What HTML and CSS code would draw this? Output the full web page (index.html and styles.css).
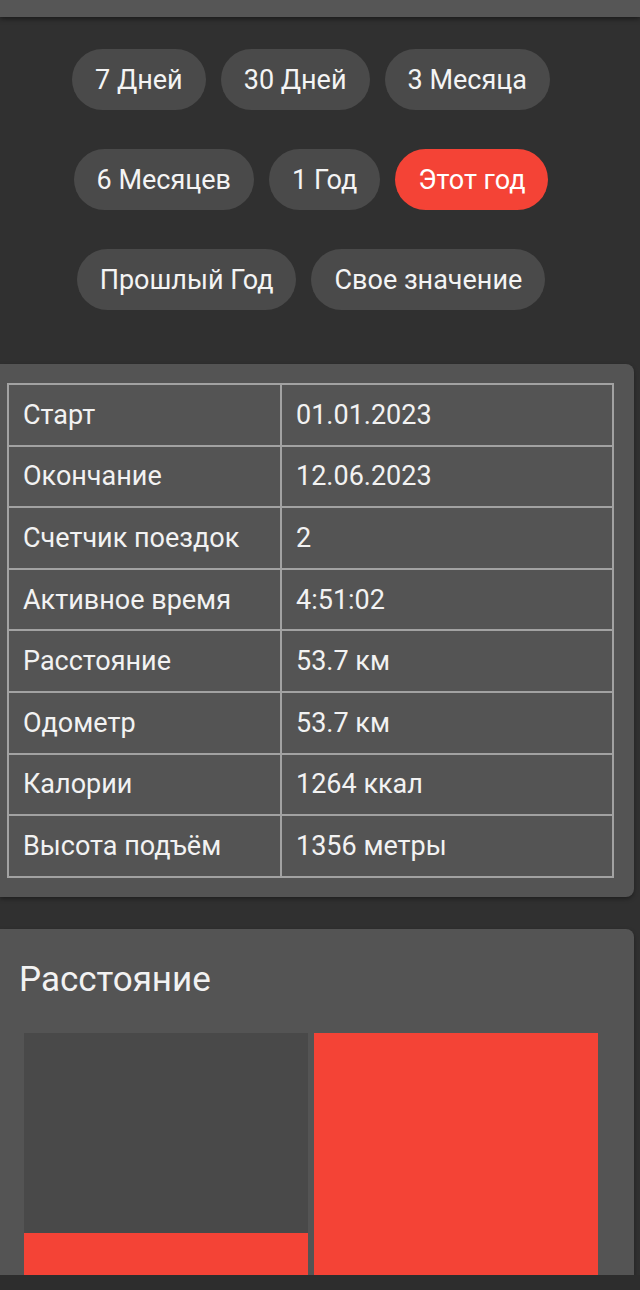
FILE: index.html
```html
<!DOCTYPE html>
<html lang="ru">
<head>
<meta charset="utf-8">
<title>Статистика</title>
<link rel="stylesheet" href="styles.css">
</head>
<body>
<div class="appbar"></div>
<div class="chips">
  <span class="chip">7 Дней</span>
  <span class="chip">30 Дней</span>
  <span class="chip">3 Месяца</span>
  <span class="chip">6 Месяцев</span>
  <span class="chip">1 Год</span>
  <span class="chip chip-active">Этот год</span>
  <span class="chip">Прошлый Год</span>
  <span class="chip">Свое значение</span>
</div>
<div class="card card-table">
  <table class="stats">
    <tr><td class="key">Старт</td><td>01.01.2023</td></tr>
    <tr><td class="key">Окончание</td><td>12.06.2023</td></tr>
    <tr><td class="key">Счетчик поездок</td><td>2</td></tr>
    <tr><td class="key">Активное время</td><td>4:51:02</td></tr>
    <tr><td class="key">Расстояние</td><td>53.7 км</td></tr>
    <tr><td class="key">Одометр</td><td>53.7 км</td></tr>
    <tr><td class="key">Калории</td><td>1264 ккал</td></tr>
    <tr><td class="key">Высота подъём</td><td>1356 метры</td></tr>
  </table>
</div>
<div class="card card-chart">
  <div class="chart-title">Расстояние</div>
  <div class="chart">
    <div class="col"><div class="fill" style="height:43px"></div></div>
    <div class="col"><div class="fill" style="height:100%"></div></div>
  </div>
</div>
<div class="navbar"></div>
</body>
</html>
```
FILE: styles.css
```css
html, body {
  margin: 0;
  padding: 0;
}
body {
  background: #303030;
  font-family: Roboto, "Noto Sans", sans-serif;
  color: #f2f2f2;
  height: 1290px;
  overflow: hidden;
}
.appbar {
  height: 17px;
  background: #565656;
  box-shadow: 0 2px 5px rgba(0,0,0,0.45);
  position: relative;
  z-index: 2;
}
.chips {
  display: flex;
  flex-wrap: wrap;
  justify-content: center;
  column-gap: 15px;
  row-gap: 39px;
  padding: 32px 0 0 0;
  width: 622px;
}
.chip {
  display: inline-flex;
  align-items: center;
  height: 61px;
  padding: 0 23px;
  border-radius: 31px;
  background: #4a4a4a;
  font-size: 27px;
  color: #f4f4f4;
  box-sizing: border-box;
}
.chip-active {
  background: #f44336;
  color: #fff;
}
.card {
  background: #545454;
  width: 634px;
  border-radius: 0 8px 8px 0;
  box-shadow: 0 2px 4px rgba(0,0,0,0.35);
  box-sizing: border-box;
}
.card-table {
  margin-top: 54px;
  padding: 19px 20px 19px 7px;
}
.stats {
  width: 100%;
  border-collapse: collapse;
  font-size: 27px;
}
.stats td {
  border: 2px solid #a2a2a2;
  height: 61.6px;
  padding: 0 14px;
  box-sizing: border-box;
  white-space: nowrap;
}
.stats td.key {
  width: 273px;
}
.card-chart {
  margin-top: 32px;
  padding: 31px 36px 30px 19px;
  border-radius: 0 8px 0 0;
}
.chart-title {
  font-size: 35px;
  line-height: 40px;
}
.chart {
  display: flex;
  gap: 6px;
  margin-top: 33px;
  margin-left: 5px;
  height: 243px;
}
.col {
  flex: 1;
  background: #494949;
  display: flex;
  flex-direction: column;
  justify-content: flex-end;
}
.fill {
  background: #f44336;
}
.navbar {
  position: fixed;
  left: 0;
  right: 0;
  bottom: 0;
  height: 15px;
  background: #2d2d2d;
}
```
